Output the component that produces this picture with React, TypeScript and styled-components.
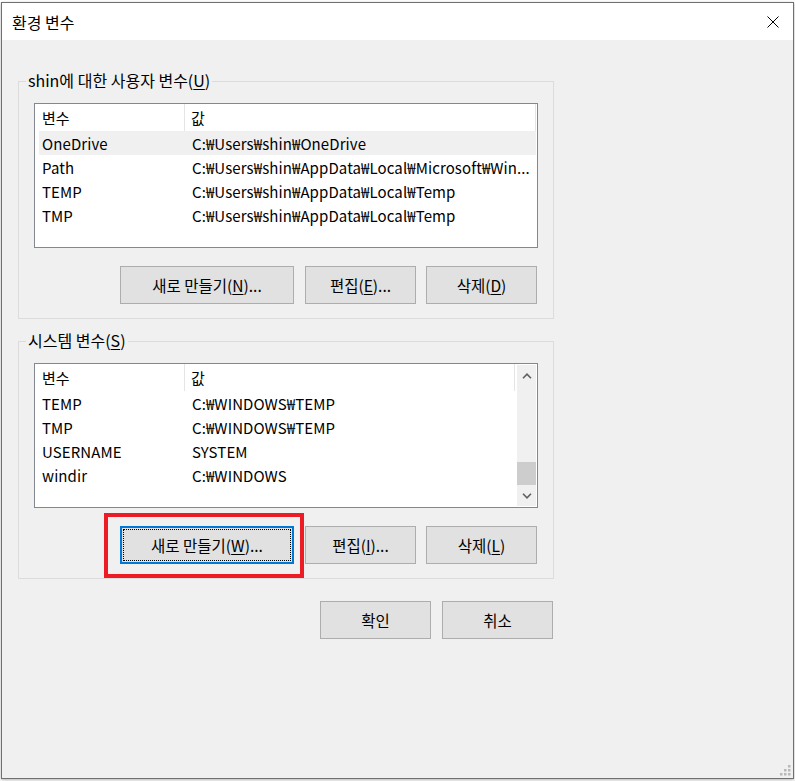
import React from "react";
import styled, { createGlobalStyle } from "styled-components";

const Global = createGlobalStyle`
  html, body { margin: 0; padding: 0; background: #ffffff; }
  body { font-family: "Noto Sans CJK KR", "Noto Sans", sans-serif; color: #000; }
  #root { width: 795px; height: 781px; }
`;

const Page = styled.div`
  width: 795px;
  height: 781px;
  box-sizing: border-box;
  padding: 2px 0 0 1px;
  background: #ffffff;
  overflow: hidden;
`;

const Window = styled.div`
  position: relative;
  width: 793px;
  height: 777px;
  box-sizing: border-box;
  border: 1px solid #707070;
  background: #f0f0f0;
  box-shadow: 0 1px 3px rgba(0, 0, 0, 0.3);
  display: flex;
  flex-direction: column;
`;

const TitleBar = styled.div`
  height: 37px;
  flex: none;
  background: #ffffff;
  display: flex;
  align-items: center;
  justify-content: space-between;
  padding: 0 14px 0 10px;
  font-size: 16px;
`;

const TitleText = styled.span`
  line-height: 20px;
`;

const CloseIcon = styled.svg`
  width: 12px;
  height: 12px;
  margin-top: 1px;
`;

const Body = styled.div`
  flex: 1;
  padding: 41px 16px 0;
  display: flex;
  flex-direction: column;
`;

const GroupBox = styled.div<{ $gap?: number }>`
  position: relative;
  width: 536px;
  box-sizing: border-box;
  border: 1px solid #dcdcdc;
  padding: 21px 15px 14px;
  margin-top: ${(p) => p.$gap ?? 0}px;
  display: flex;
  flex-direction: column;
  gap: 18px;
`;

const Legend = styled.span`
  position: absolute;
  left: 7px;
  top: -12px;
  padding: 0 2px;
  background: #f0f0f0;
  font-size: 16px;
  line-height: 20px;
  white-space: nowrap;
`;

const ListView = styled.div`
  height: 145px;
  box-sizing: border-box;
  border: 1px solid #828790;
  background: #ffffff;
  display: flex;
  font-size: 15px;
`;

const ListContent = styled.div`
  flex: 1;
  min-width: 0;
  display: flex;
  flex-direction: column;
`;

const Header = styled.div`
  height: 27px;
  flex: none;
  display: grid;
  grid-template-columns: 150px 1fr;
  margin-right: 1px;
  border-right: 1px solid #e5e5e5;
`;

const HeaderCell = styled.div<{ $first?: boolean }>`
  display: flex;
  align-items: center;
  padding-left: ${(p) => (p.$first ? 7 : 6)}px;
  border-right: ${(p) => (p.$first ? "1px solid #e5e5e5" : "none")};
  white-space: nowrap;
`;

const Row = styled.div<{ $selected?: boolean }>`
  height: 24px;
  flex: none;
  margin: 0 1px 0 4px;
  display: grid;
  grid-template-columns: 147px 1fr;
  align-items: center;
  background: ${(p) => (p.$selected ? "#f0f0f0" : "transparent")};
`;

const Cell = styled.div<{ $first?: boolean }>`
  padding-left: ${(p) => (p.$first ? 3 : 6)}px;
  white-space: nowrap;
  overflow: hidden;
  letter-spacing: 0.1px;
`;

const ScrollBar = styled.div`
  width: 19px;
  flex: none;
  margin: 1px;
  background: #f0f0f0;
  display: flex;
  flex-direction: column;
`;

const ScrollArrow = styled.div`
  height: 21px;
  flex: none;
  display: flex;
  align-items: center;
  justify-content: center;
`;

const ScrollTrack = styled.div`
  flex: 1;
  display: flex;
  flex-direction: column;
  justify-content: flex-end;
`;

const Thumb = styled.div`
  height: 23px;
  background: #cdcdcd;
`;

const ButtonRow = styled.div`
  display: flex;
  justify-content: flex-end;
  margin-right: 1px;
`;

const BtnWrap = styled.div<{ $ml?: number }>`
  position: relative;
  margin-left: ${(p) => p.$ml ?? 0}px;
  display: flex;
`;

const Button = styled.button<{ $w: number; $focused?: boolean }>`
  position: relative;
  width: ${(p) => p.$w}px;
  height: 38px;
  box-sizing: border-box;
  margin: 0;
  padding: 0 0 1px;
  background: #e1e1e1;
  border: ${(p) => (p.$focused ? "2px solid #0078d7" : "1px solid #adadad")};
  font-family: "Noto Sans CJK KR", "Noto Sans", sans-serif;
  font-size: 15.5px;
  color: #000;
  display: flex;
  align-items: center;
  justify-content: center;
  white-space: nowrap;
  &::after {
    content: "";
    display: ${(p) => (p.$focused ? "block" : "none")};
    position: absolute;
    inset: 1px;
    border: 1px dotted #000;
  }
`;

const Mn = styled.span`
  text-decoration: underline;
  text-underline-offset: 2px;
  text-decoration-thickness: 1px;
`;

const Highlight = styled.div`
  position: absolute;
  left: -16px;
  top: -13px;
  width: 200px;
  height: 65px;
  box-sizing: border-box;
  border: 4px solid #ed1c24;
  pointer-events: none;
`;

const Footer = styled.div`
  width: 536px;
  margin-top: 22px;
  padding-right: 1px;
  box-sizing: border-box;
  display: flex;
  justify-content: flex-end;
  gap: 11px;
`;

const Grip = styled.svg`
  position: absolute;
  right: 2px;
  bottom: 2px;
  width: 12px;
  height: 12px;
`;

type Item = { name: string; value: string; selected?: boolean };

const userVars: Item[] = [
  { name: "OneDrive", value: "C:₩Users₩shin₩OneDrive", selected: true },
  { name: "Path", value: "C:₩Users₩shin₩AppData₩Local₩Microsoft₩Win..." },
  { name: "TEMP", value: "C:₩Users₩shin₩AppData₩Local₩Temp" },
  { name: "TMP", value: "C:₩Users₩shin₩AppData₩Local₩Temp" },
];

const sysVars: Item[] = [
  { name: "TEMP", value: "C:₩WINDOWS₩TEMP" },
  { name: "TMP", value: "C:₩WINDOWS₩TEMP" },
  { name: "USERNAME", value: "SYSTEM" },
  { name: "windir", value: "C:₩WINDOWS" },
];

const Chevron: React.FC<{ up?: boolean }> = ({ up }) => (
  <svg width="10" height="6" viewBox="0 0 10 6">
    <path
      d={up ? "M1 5.2 L5 1.2 L9 5.2" : "M1 0.8 L5 4.8 L9 0.8"}
      fill="none"
      stroke="#606060"
      strokeWidth="1.6"
    />
  </svg>
);

const List: React.FC<{ items: Item[]; scroll?: boolean }> = ({ items, scroll }) => (
  <ListView>
    <ListContent>
      <Header>
        <HeaderCell $first>변수</HeaderCell>
        <HeaderCell>값</HeaderCell>
      </Header>
      {items.map((it) => (
        <Row key={it.name} $selected={it.selected}>
          <Cell $first>{it.name}</Cell>
          <Cell>{it.value}</Cell>
        </Row>
      ))}
    </ListContent>
    {scroll && (
      <ScrollBar>
        <ScrollArrow>
          <Chevron up />
        </ScrollArrow>
        <ScrollTrack>
          <Thumb />
        </ScrollTrack>
        <ScrollArrow>
          <Chevron />
        </ScrollArrow>
      </ScrollBar>
    )}
  </ListView>
);

export default function App() {
  return (
    <>
      <Global />
      <Page>
        <Window>
          <TitleBar>
            <TitleText>환경 변수</TitleText>
            <CloseIcon viewBox="0 0 12 12">
              <path d="M0.5 0.5 L11.5 11.5 M11.5 0.5 L0.5 11.5" stroke="#000" strokeWidth="1" fill="none" />
            </CloseIcon>
          </TitleBar>
          <Body>
            <GroupBox>
              <Legend>
                shin에 대한 사용자 변수(<Mn>U</Mn>)
              </Legend>
              <List items={userVars} />
              <ButtonRow>
                <BtnWrap>
                  <Button $w={174}>
                    새로 만들기(<Mn>N</Mn>)...
                  </Button>
                </BtnWrap>
                <BtnWrap $ml={11}>
                  <Button $w={111}>
                    편집(<Mn>E</Mn>)...
                  </Button>
                </BtnWrap>
                <BtnWrap $ml={10}>
                  <Button $w={111}>
                    삭제(<Mn>D</Mn>)
                  </Button>
                </BtnWrap>
              </ButtonRow>
            </GroupBox>
            <GroupBox $gap={22}>
              <Legend>
                시스템 변수(<Mn>S</Mn>)
              </Legend>
              <List items={sysVars} scroll />
              <ButtonRow>
                <BtnWrap>
                  <Button $w={174} $focused>
                    새로 만들기(<Mn>W</Mn>)...
                  </Button>
                  <Highlight />
                </BtnWrap>
                <BtnWrap $ml={11}>
                  <Button $w={111}>
                    편집(<Mn>I</Mn>)...
                  </Button>
                </BtnWrap>
                <BtnWrap $ml={10}>
                  <Button $w={111}>
                    삭제(<Mn>L</Mn>)
                  </Button>
                </BtnWrap>
              </ButtonRow>
            </GroupBox>
            <Footer>
              <Button $w={111}>확인</Button>
              <Button $w={111}>취소</Button>
            </Footer>
          </Body>
          <Grip viewBox="0 0 12 12">
            <g fill="#b8b8b8">
              <rect x="9" y="1" width="2.5" height="2.5" />
              <rect x="5" y="5" width="2.5" height="2.5" />
              <rect x="9" y="5" width="2.5" height="2.5" />
              <rect x="1" y="9" width="2.5" height="2.5" />
              <rect x="5" y="9" width="2.5" height="2.5" />
              <rect x="9" y="9" width="2.5" height="2.5" />
            </g>
          </Grip>
        </Window>
      </Page>
    </>
  );
}
